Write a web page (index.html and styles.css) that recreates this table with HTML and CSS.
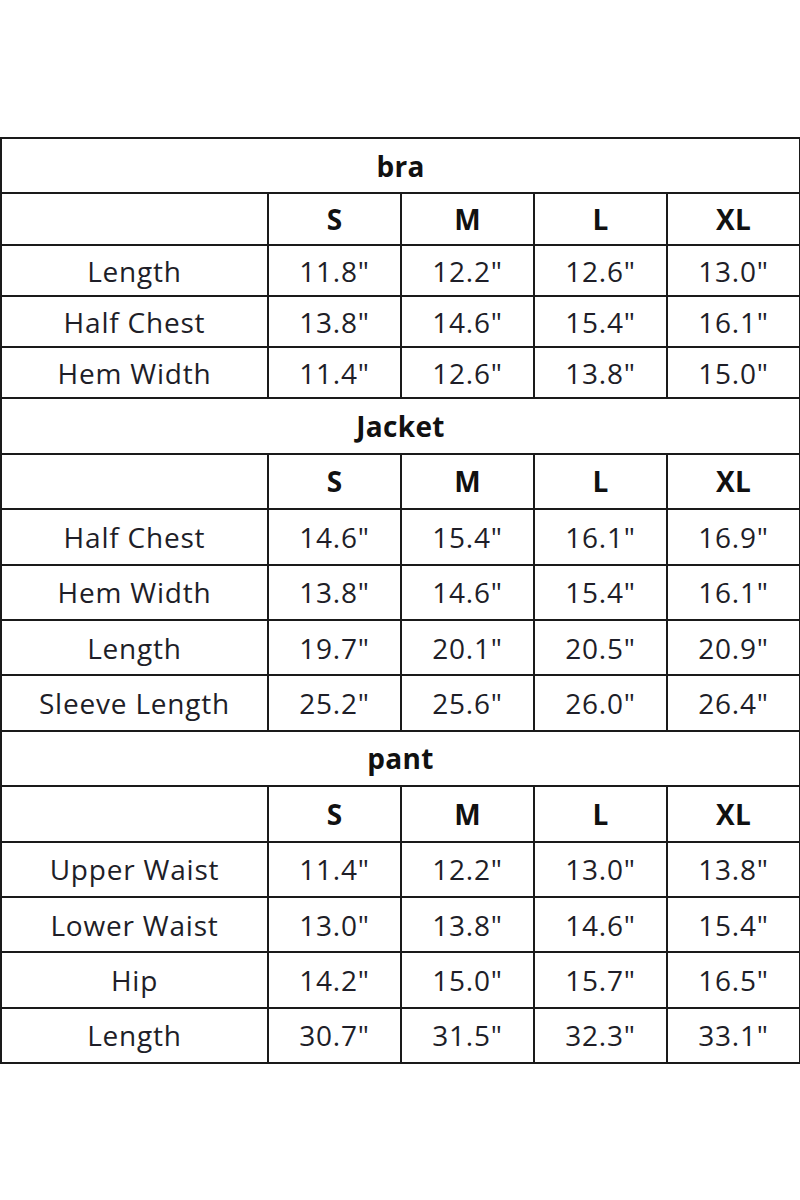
FILE: index.html
```html
<!DOCTYPE html>
<html>
<head>
<meta charset="utf-8">
<link rel="stylesheet" href="styles.css">
</head>
<body>
<table class="chart">
  <colgroup><col class="c0"><col class="c1"><col class="c1"><col class="c1"><col class="c1"></colgroup>
  <tr class="title t1"><td colspan="5">bra</td></tr>
  <tr class="sizes s1"><td></td><td>S</td><td>M</td><td>L</td><td>XL</td></tr>
  <tr class="r1"><td>Length</td><td>11.8"</td><td>12.2"</td><td>12.6"</td><td>13.0"</td></tr>
  <tr class="r1"><td>Half Chest</td><td>13.8"</td><td>14.6"</td><td>15.4"</td><td>16.1"</td></tr>
  <tr class="r1"><td>Hem Width</td><td>11.4"</td><td>12.6"</td><td>13.8"</td><td>15.0"</td></tr>
  <tr class="title"><td colspan="5">Jacket</td></tr>
  <tr class="sizes"><td></td><td>S</td><td>M</td><td>L</td><td>XL</td></tr>
  <tr><td>Half Chest</td><td>14.6"</td><td>15.4"</td><td>16.1"</td><td>16.9"</td></tr>
  <tr><td>Hem Width</td><td>13.8"</td><td>14.6"</td><td>15.4"</td><td>16.1"</td></tr>
  <tr><td>Length</td><td>19.7"</td><td>20.1"</td><td>20.5"</td><td>20.9"</td></tr>
  <tr><td>Sleeve Length</td><td>25.2"</td><td>25.6"</td><td>26.0"</td><td>26.4"</td></tr>
  <tr class="title"><td colspan="5">pant</td></tr>
  <tr class="sizes"><td></td><td>S</td><td>M</td><td>L</td><td>XL</td></tr>
  <tr><td>Upper Waist</td><td>11.4"</td><td>12.2"</td><td>13.0"</td><td>13.8"</td></tr>
  <tr><td>Lower Waist</td><td>13.0"</td><td>13.8"</td><td>14.6"</td><td>15.4"</td></tr>
  <tr><td>Hip</td><td>14.2"</td><td>15.0"</td><td>15.7"</td><td>16.5"</td></tr>
  <tr><td>Length</td><td>30.7"</td><td>31.5"</td><td>32.3"</td><td>33.1"</td></tr>
</table>
</body>
</html>
```
FILE: styles.css
```css
html, body {
  margin: 0;
  padding: 0;
  background: #ffffff;
}
.chart {
  margin-top: 137px;
  width: 799px;
  border-collapse: collapse;
  table-layout: fixed;
  font-family: "Open Sans", "Noto Sans", sans-serif;
  font-size: 28px;
  letter-spacing: 0.8px;
  color: #1e1e28;
}
.c0 { width: 267px; }
.c1 { width: 133px; }
.chart td {
  border: 2px solid #1a1a1a;
  text-align: center;
  vertical-align: middle;
  padding: 0;
  height: 53.4px;
  line-height: 30px;
}
.chart tr.r1 td { height: 49px; }
.chart tr.s1 td { height: 50px; }
.chart tr.title td,
.chart tr.sizes td {
  font-weight: 700;
  letter-spacing: 0.3px;
  color: #111;
}
```
